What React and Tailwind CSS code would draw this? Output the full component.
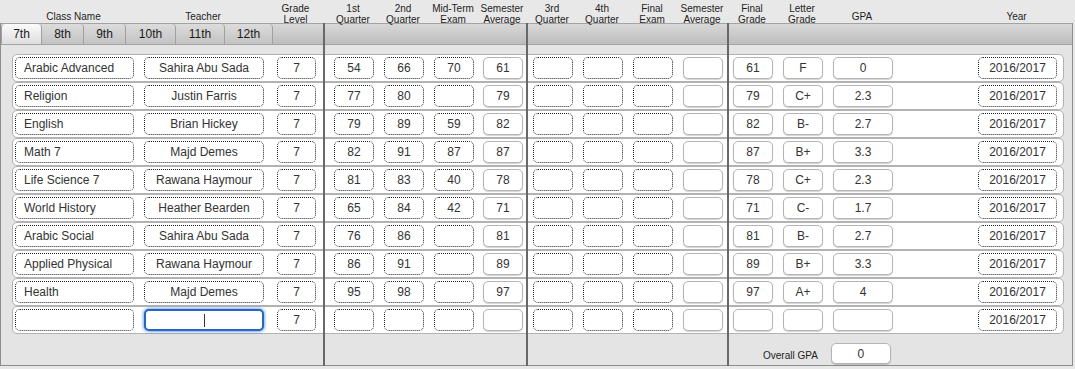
import React from 'react';

// column layout: field width + left margin (px), mirrors the FileMaker layout
const COLS = [
  { key: 'name', w: 119, ml: 2, dotted: true, left: true, label: ['Class Name'] },
  { key: 'teacher', w: 120, ml: 10, dotted: true, label: ['Teacher'] },
  { key: 'grade', w: 39, ml: 13, dotted: true, label: ['Grade', 'Level'] },
  { key: 'q1', w: 40, ml: 18, dotted: true, label: ['1st', 'Quarter'] },
  { key: 'q2', w: 40, ml: 10, dotted: true, label: ['2nd', 'Quarter'] },
  { key: 'mid', w: 40, ml: 10, dotted: true, label: ['Mid-Term', 'Exam'] },
  { key: 'sa1', w: 40, ml: 9, label: ['Semester', 'Average'] },
  { key: 'q3', w: 40, ml: 10, dotted: true, label: ['3rd', 'Quarter'] },
  { key: 'q4', w: 40, ml: 10, dotted: true, label: ['4th', 'Quarter'] },
  { key: 'fe', w: 40, ml: 10, dotted: true, label: ['Final', 'Exam'] },
  { key: 'sa2', w: 40, ml: 10, label: ['Semester', 'Average'] },
  { key: 'final', w: 40, ml: 10, label: ['Final', 'Grade'] },
  { key: 'letter', w: 40, ml: 10, label: ['Letter', 'Grade'] },
  { key: 'gpa', w: 60, ml: 10, label: ['GPA'] },
  { key: 'year', w: 79, ml: 85, dotted: true, label: ['Year'] },
];

const ROWS = [
  ['Arabic Advanced', 'Sahira Abu Sada', '7', '54', '66', '70', '61', '', '', '', '', '61', 'F', '0', '2016/2017'],
  ['Religion', 'Justin Farris', '7', '77', '80', '', '79', '', '', '', '', '79', 'C+', '2.3', '2016/2017'],
  ['English', 'Brian Hickey', '7', '79', '89', '59', '82', '', '', '', '', '82', 'B-', '2.7', '2016/2017'],
  ['Math 7', 'Majd Demes', '7', '82', '91', '87', '87', '', '', '', '', '87', 'B+', '3.3', '2016/2017'],
  ['Life Science 7', 'Rawana Haymour', '7', '81', '83', '40', '78', '', '', '', '', '78', 'C+', '2.3', '2016/2017'],
  ['World History', 'Heather Bearden', '7', '65', '84', '42', '71', '', '', '', '', '71', 'C-', '1.7', '2016/2017'],
  ['Arabic Social', 'Sahira Abu Sada', '7', '76', '86', '', '81', '', '', '', '', '81', 'B-', '2.7', '2016/2017'],
  ['Applied Physical', 'Rawana Haymour', '7', '86', '91', '', '89', '', '', '', '', '89', 'B+', '3.3', '2016/2017'],
  ['Health', 'Majd Demes', '7', '95', '98', '', '97', '', '', '', '', '97', 'A+', '4', '2016/2017'],
  ['', '', '7', '', '', '', '', '', '', '', '', '', '', '', '2016/2017'],
];

const TABS = [
  { label: '7th', w: 41, active: true },
  { label: '8th', w: 42 },
  { label: '9th', w: 42 },
  { label: '10th', w: 50 },
  { label: '11th', w: 49 },
  { label: '12th', w: 48 },
];

function Field({ col, value, focused }) {
  if (focused) {
    return (
      <div
        className="h-[22px] shrink-0 flex items-center justify-center rounded-[5px] border-2 border-[#2767c0] bg-white shadow-[0_0_3px_1px_rgba(70,140,230,0.7)]"
        style={{ width: col.w, marginLeft: col.ml }}
      >
        <span className="w-px h-[13px] bg-[#333]" />
      </div>
    );
  }
  const border = col.dotted
    ? 'border border-dotted border-[#222]'
    : 'border border-[#b4b4b4] shadow-[0_1px_1px_rgba(0,0,0,0.18)]';
  return (
    <div
      className={`h-[22px] shrink-0 flex items-center rounded-[5px] bg-white text-[12px] text-[#333] ${border} ${
        col.left ? 'justify-start pl-[8px]' : 'justify-center'
      }`}
      style={{ width: col.w, marginLeft: col.ml }}
    >
      <span className="whitespace-nowrap">{value}</span>
    </div>
  );
}

function HeaderLabels() {
  return (
    <div className="relative z-30 h-[23px] flex items-end pl-[12px]">
      {COLS.map((col) => (
        <div
          key={col.key}
          className={`shrink-0 flex justify-center text-[10px] leading-[11px] text-[#1e1e1e] ${
            col.label.length > 1 ? 'mb-[-2px]' : 'mb-[1px]'
          }`}
          style={{ width: col.w, marginLeft: col.ml }}
        >
          <span className="whitespace-nowrap text-center">
            {col.label.map((line, i) => (
              <span key={i} className="block">
                {line}
              </span>
            ))}
          </span>
        </div>
      ))}
    </div>
  );
}

function TabStrip() {
  return (
    <div className="h-[22px] flex border-t border-b border-[#a3a3a3] bg-gradient-to-b from-[#d8d8d8] to-[#bdbdbd]">
      {TABS.map((tab) => (
        <div
          key={tab.label}
          className={`shrink-0 flex items-center justify-center text-[12px] text-[#1a1a1a] border-r border-[#a0a0a0] rounded-t-[4px] ${
            tab.active
              ? 'bg-gradient-to-b from-[#fbfbfb] to-[#dedede] border-l'
              : 'bg-gradient-to-b from-[#dcdcdc] to-[#c3c3c3]'
          }`}
          style={{ width: tab.w }}
        >
          {tab.label}
        </div>
      ))}
    </div>
  );
}

export default function App() {
  return (
    <div className="relative w-[1075px] h-[369px] overflow-hidden bg-[#e8e8e8] font-['Liberation_Sans',Arial,sans-serif]">
      <HeaderLabels />
      <div className="relative z-10 w-[1073px] h-[343px] border-l border-r border-b border-[#8d8d8d] bg-[#e4e4e4] flex flex-col">
        <TabStrip />
        <div className="flex flex-col pt-[9px] pl-[11px]">
          {ROWS.map((row, r) => (
            <div
              key={r}
              className="w-[1052px] h-[28px] flex items-center rounded-[5px] border border-[#b2b2b2] bg-white"
            >
              {COLS.map((col, c) => (
                <Field
                  key={col.key}
                  col={col}
                  value={row[c]}
                  focused={r === ROWS.length - 1 && col.key === 'teacher'}
                />
              ))}
            </div>
          ))}
        </div>
        <div className="flex items-center mt-[9px] pl-[762px]">
          <span className="text-[10px] text-[#1e1e1e] mt-[4px]">Overall GPA</span>
          <div className="ml-[13px] w-[60px] h-[21px] flex items-center justify-center rounded-[5px] bg-white border border-[#b4b4b4] shadow-[0_1px_1px_rgba(0,0,0,0.18)] text-[12px] text-[#333]">
            0
          </div>
        </div>
      </div>

      {/* section dividers drawn over the rows */}
      <div className="absolute z-20 left-[323px] top-[23px] w-[2px] h-[343px] bg-[#686868]" />
      <div className="absolute z-20 left-[526px] top-[23px] w-[2px] h-[343px] bg-[#686868]" />
      <div className="absolute z-20 left-[727px] top-[23px] w-[2px] h-[343px] bg-[#686868]" />
    </div>
  );
}
